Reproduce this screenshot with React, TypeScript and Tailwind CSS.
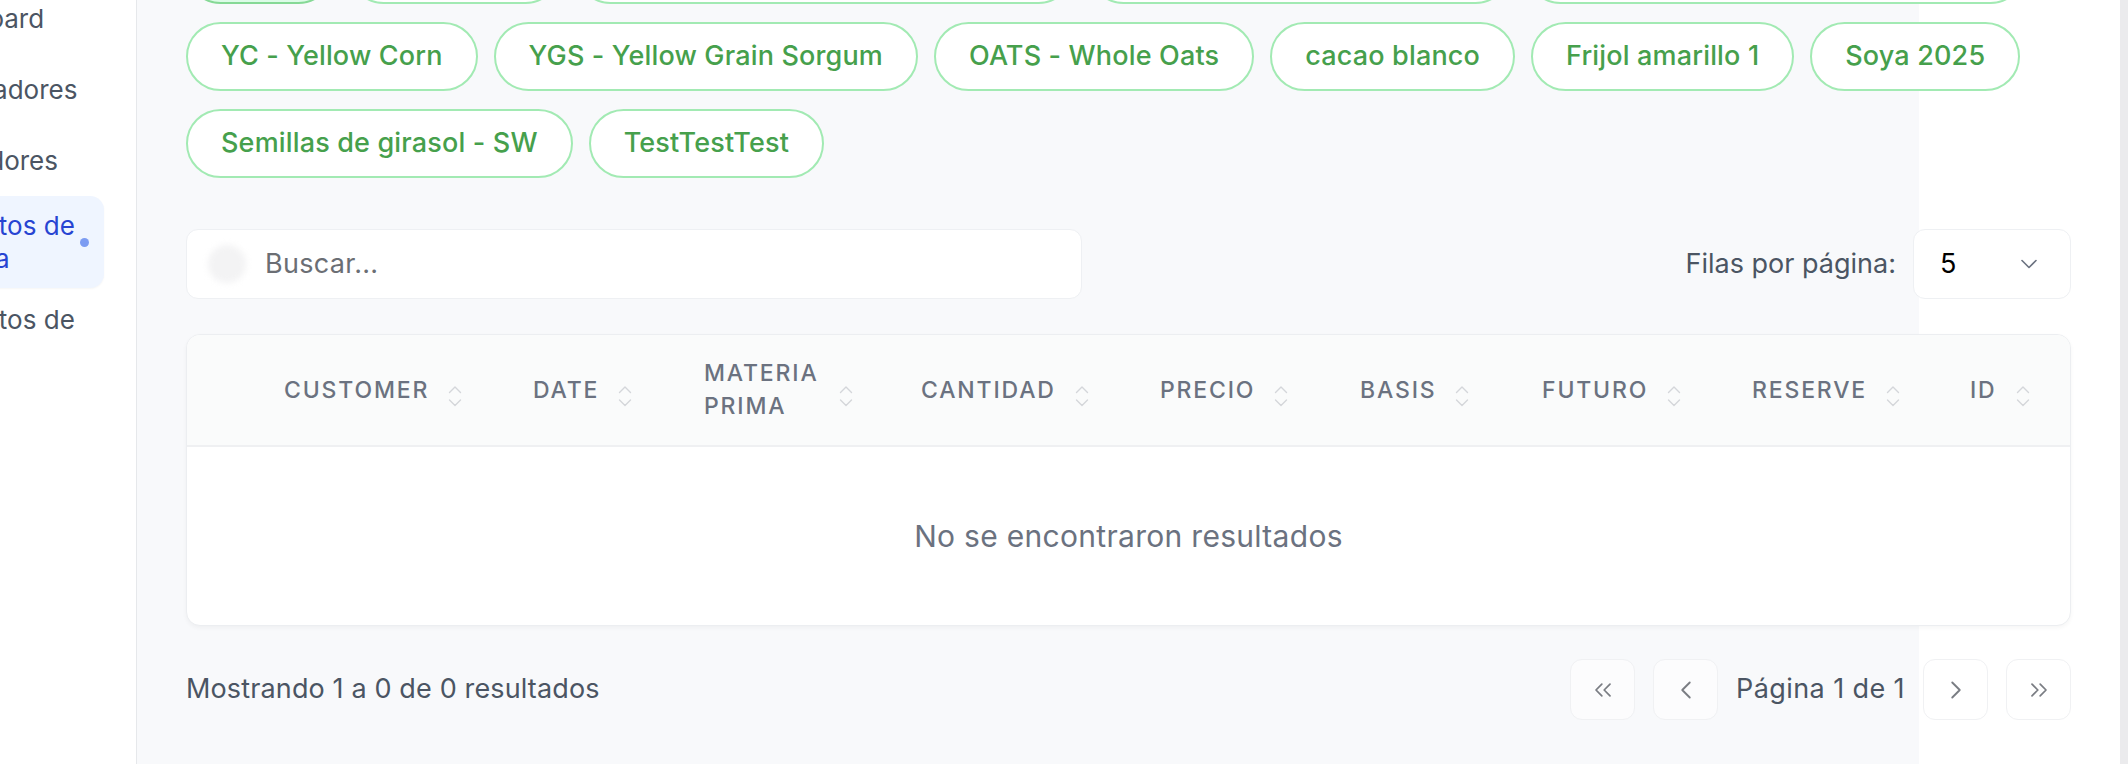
import { ChevronDown, ChevronLeft, ChevronRight, ChevronsLeft, ChevronsRight } from "lucide-react";

const topChips = [
  { label: "Todos", w: "w-[147px]", active: true },
  { label: "SB - Soybeans", w: "w-[211px]", active: false },
  { label: "HRW - Hard Red Winter Wheat", w: "w-[497px]", active: false },
  { label: "SRW - Soft Red Winter", w: "w-[421px]", active: false },
  { label: "DDGS - Distillers Dried Grains", w: "w-[499px]", active: false },
];

const rowTwo = ["YC - Yellow Corn", "YGS - Yellow Grain Sorgum", "OATS - Whole Oats", "cacao blanco", "Frijol amarillo 1", "Soya 2025"];
const rowThree = ["Semillas de girasol - SW", "TestTestTest"];

const columns = [
  { label: "CUSTOMER", w: "w-[249px]" },
  { label: "DATE", w: "w-[171px]" },
  { label: "MATERIA PRIMA", w: "w-[217px]", wrap: true },
  { label: "CANTIDAD", w: "w-[239px]" },
  { label: "PRECIO", w: "w-[200px]" },
  { label: "BASIS", w: "w-[182px]" },
  { label: "FUTURO", w: "w-[210px]" },
  { label: "RESERVE", w: "w-[218px]" },
  { label: "ID", w: "flex-1" },
];

function SortIcon() {
  return (
    <svg width="14" height="25" viewBox="0 0 14 25" fill="none" stroke="#d4d6da" strokeWidth="1.4" strokeLinecap="round" strokeLinejoin="round" className="mt-[12px] shrink-0">
      <polyline points="1.5,8.5 7,3 12.5,8.5" />
      <polyline points="1.5,16 7,21.5 12.5,16" />
    </svg>
  );
}

function Chip({ label, w, active }: { label: string; w?: string; active?: boolean }) {
  return (
    <div
      className={`flex h-[69px] shrink-0 items-center justify-center whitespace-nowrap rounded-full border-2 px-[33px] text-[27px] font-medium tracking-[0.006em] text-[#46a04c] ${w ?? ""} ${
        active ? "border-[#86d996] bg-[#dcfce7]" : "border-[#a2eab3] bg-white"
      }`}
    >
      {label}
    </div>
  );
}

function Sidebar() {
  const item = "px-[20px] py-[19px] text-[26px] leading-[33px] text-[#4b5563] whitespace-nowrap";
  return (
    <aside className="w-[137px] shrink-0 overflow-hidden border-r border-[#e6e8eb] bg-white">
      <nav className="-ml-[110px] -mt-[17px] flex w-[214px] flex-col">
        <div className={item}>Dashboard</div>
        <div className={item}>Compradores</div>
        <div className={item}>Vendedores</div>
        <div className="flex items-center justify-between rounded-[14px] bg-[#eff5ff] py-[13px] pl-[26px] pr-[15px] shadow-[0_1px_2px_rgba(0,0,0,0.04)]">
          <span className="w-[170px] text-[26px] leading-[33px] text-[#2744d2]">Contratos de compra</span>
          <span className="h-[9px] w-[9px] rounded-full bg-[#7c9cf2]" />
        </div>
        <div className="px-[26px] py-[15px] text-[26px] leading-[33px] text-[#4b5563]">Contratos de venta</div>
      </nav>
    </aside>
  );
}

function Toolbar() {
  return (
    <div className="mt-[51px] flex h-[70px] items-center justify-between">
      <div className="flex h-[70px] w-[896px] items-center rounded-[12px] border border-[#eef0f3] bg-white pl-[21px]">
        <span className="h-[38px] w-[38px] rounded-full bg-[#f3f3f4] blur-[3px]" />
        <input
          placeholder="Buscar..."
          className="ml-[19px] flex-1 bg-transparent text-[27px] tracking-[0.012em] text-[#374151] outline-none placeholder:text-[#6b6e74]"
        />
      </div>
      <div className="flex items-center gap-[17px]">
        <span className="text-[27px] text-[#4b5563]">Filas por página:</span>
        <div className="flex h-[70px] w-[158px] items-center justify-between rounded-[12px] border border-[#eef0f3] bg-white pl-[26px] pr-[27px]">
          <span className="text-[27px] text-black">5</span>
          <ChevronDown size={28} strokeWidth={1.4} className="text-[#6b7280]" />
        </div>
      </div>
    </div>
  );
}

function TableCard() {
  return (
    <div className="mt-[35px] overflow-hidden rounded-[14px] border border-[#eceef1] bg-white shadow-[0_2px_4px_rgba(0,0,0,0.04)]">
      <div className="flex h-[112px] items-center border-b-2 border-[#eff0f2] bg-[#fafbfb]">
        <div className="w-[61px] shrink-0" />
        {columns.map((c) => (
          <div key={c.label} className={`flex shrink-0 items-center gap-[19px] pl-[36px] ${c.w}`}>
            <span
              className={`text-[23px] font-medium uppercase leading-[33px] tracking-[0.08em] text-[#6b7280] ${
                c.wrap ? "w-[116px] whitespace-normal" : "whitespace-nowrap"
              }`}
            >
              {c.label}
            </span>
            <SortIcon />
          </div>
        ))}
      </div>
      <div className="flex h-[178px] items-center justify-center text-[30px] tracking-[0.01em] text-[#6b7280]">No se encontraron resultados</div>
    </div>
  );
}

function PageButton({ children }: { children: React.ReactNode }) {
  return (
    <div className="flex h-[61px] w-[65px] items-center justify-center rounded-[12px] border border-[#f0f1f3] bg-white/50 text-[#7a7d83]">
      {children}
    </div>
  );
}

function Footer() {
  return (
    <div className="mt-[33px] flex h-[61px] items-center justify-between">
      <span className="text-[27px] tracking-[0.005em] text-[#4b5563]">Mostrando 1 a 0 de 0 resultados</span>
      <div className="flex items-center gap-[18px]">
        <PageButton>
          <ChevronsLeft size={28} strokeWidth={1.5} />
        </PageButton>
        <PageButton>
          <ChevronLeft size={30} strokeWidth={1.5} />
        </PageButton>
        <span className="text-[27px] tracking-[0.015em] text-[#4b5563]">Página 1 de 1</span>
        <PageButton>
          <ChevronRight size={30} strokeWidth={1.5} />
        </PageButton>
        <PageButton>
          <ChevronsRight size={28} strokeWidth={1.5} />
        </PageButton>
      </div>
    </div>
  );
}

export default function App() {
  return (
    <div className="flex h-[764px] w-full overflow-hidden bg-white font-['Inter',sans-serif]">
      <Sidebar />
      <main className="min-w-0 flex-1 overflow-hidden bg-[linear-gradient(to_right,#f8f9fb_1782px,#ffffff_1782px)] px-[49px]">
        <div className="-mt-[65px] flex flex-col gap-[18px]">
          <div className="flex gap-4">
            {topChips.map((c) => (
              <Chip key={c.label} label={c.label} w={c.w} active={c.active} />
            ))}
          </div>
          <div className="flex gap-4">
            {rowTwo.map((l) => (
              <Chip key={l} label={l} />
            ))}
          </div>
          <div className="flex gap-4">
            {rowThree.map((l) => (
              <Chip key={l} label={l} />
            ))}
          </div>
        </div>
        <Toolbar />
        <TableCard />
        <Footer />
      </main>
      <div className="w-[8px] shrink-0 bg-[#ebebed]" />
    </div>
  );
}
